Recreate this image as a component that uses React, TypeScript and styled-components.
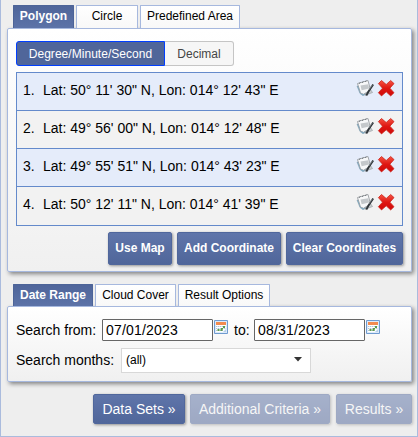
import React from "react";
import styled, { createGlobalStyle, css } from "styled-components";

const Global = createGlobalStyle`
  *{box-sizing:border-box}
  html,body{margin:0;background:#eee}
  body,button,input{font-family:"Liberation Sans",Arial,sans-serif;color:#000}
  button{margin:0;padding:0;white-space:nowrap}
`;

const Sidebar = styled.main`
  width: 418px;
  height: 437px;
  overflow: hidden;
  padding: 5px 5px 0 6px;
  background: #eee;
  border: solid #aabbdd;
  border-width: 0 1px 1px 1px;
`;

const Tabs = styled.nav<{ $height: number; $top?: number }>`
  display: flex;
  gap: 2px;
  height: ${(p) => p.$height}px;
  margin: ${(p) => p.$top ?? 0}px 0 0 6px;
`;

const Tab = styled.button<{ $width: number; $active?: boolean }>`
  width: ${(p) => p.$width}px;
  height: 100%;
  padding-bottom: 2px;
  font-size: 12px;
  border: 1px solid #a6b8de;
  border-bottom: 0;
  border-radius: 1px 1px 0 0;
  background: linear-gradient(#fff, #f8f8f8);
  ${(p) =>
    p.$active &&
    css`
      color: #fff;
      font-weight: bold;
      border-color: #4d6498;
      background: linear-gradient(#4f659a, #5c73a8);
    `}
`;

const Panel = styled.section<{ $height: number }>`
  width: 405px;
  height: ${(p) => p.$height}px;
  padding: 12px 8px 0 8px;
  border: 1px solid #a6b8de;
  border-radius: 2px;
  background: linear-gradient(#fff, #f0f0f0);
  box-shadow: 2px 2px 4px rgba(0, 0, 0, 0.45);
`;

const Toggle = styled.div`
  display: flex;
  height: 25px;
  margin-bottom: 6px;
`;

const ToggleOption = styled.button<{ $selected?: boolean }>`
  width: ${(p) => (p.$selected ? 149 : 69)}px;
  font-size: 12px;
  letter-spacing: ${(p) => (p.$selected ? 0.04 : 0)}px;
  color: ${(p) => (p.$selected ? "#fff" : "#454545")};
  background: ${(p) => (p.$selected ? "#50669a" : "#f6f6f6")};
  border: 1px solid ${(p) => (p.$selected ? "#003eff" : "#c5c5c5")};
  border-left-width: ${(p) => (p.$selected ? 1 : 0)}px;
  border-radius: ${(p) => (p.$selected ? "3px 0 0 3px" : "0 3px 3px 0")};
`;

const CoordinateList = styled.ul`
  width: 387px;
  margin: 0;
  padding: 0;
  list-style: none;
  border: 1px solid #648acb;
`;

const CoordinateRow = styled.li`
  display: flex;
  height: 38px;
  padding: 6px 7px 0 6px;
  border-bottom: 1px solid #648acb;
  background: #f2f2f2;
  &:nth-child(odd) {
    background: #e5ecfa;
  }
  &:last-child {
    border-bottom: 0;
  }
`;

const Coordinate = styled.span`
  flex: 1;
  padding-top: 2px;
  font-size: 14px;
  line-height: 18px;
  white-space: pre;
`;

const Ordinal = styled.span`
  display: inline-block;
  width: 20px;
`;

const RowIcon = styled.svg`
  width: 18px;
  height: 18px;
  margin-left: 3px;
`;

const Actions = styled.div<{ $footer?: boolean }>`
  display: flex;
  justify-content: flex-end;
  gap: 5px;
  margin-top: ${(p) => (p.$footer ? 12 : 6)}px;
`;

const Button = styled.button<{ $width: number; $large?: boolean }>`
  width: ${(p) => p.$width}px;
  height: ${(p) => (p.$large ? 30 : 33)}px;
  padding-bottom: ${(p) => (p.$large ? 0 : 2)}px;
  color: #fff;
  font-size: ${(p) => (p.$large ? 14 : 12)}px;
  font-weight: ${(p) => (p.$large ? "normal" : "bold")};
  border: 1px solid #50679c;
  border-radius: 2px;
  background: linear-gradient(#5f75aa, #50669a);
  box-shadow: 1px 1px 3px rgba(0, 0, 0, 0.4);
  &:disabled {
    opacity: 0.5;
  }
  &:last-child {
    margin-left: ${(p) => (p.$large ? 1 : 0)}px;
  }
`;

const Field = styled.div<{ $height: number; $top?: number }>`
  display: flex;
  height: ${(p) => p.$height}px;
  margin-top: ${(p) => p.$top ?? 0}px;
  font-size: 14px;
  line-height: ${(p) => p.$height}px;
  white-space: nowrap;
`;

const Label = styled.label<{ $width: number }>`
  width: ${(p) => p.$width}px;
`;

const DateInput = styled.input`
  width: 111px;
  height: 22px;
  padding: 0 4px 0 3px;
  font-size: 14px;
  letter-spacing: 0.2px;
  border: 1px solid #666;
  border-radius: 1px;
  background: #fff;
  outline: none;
`;

const CalendarSvg = styled.svg`
  width: 14px;
  height: 14px;
  margin: 1px 6px 0 1px;
`;

const Select = styled.button`
  display: flex;
  align-items: center;
  justify-content: space-between;
  width: 190px;
  height: 25px;
  padding: 0 8px 2px 4px;
  font-size: 12px;
  border: 1px solid #d8d8d8;
  background: #fff;
`;

const Caret = styled.svg`
  width: 8px;
  height: 5px;
`;

const NoteIcon = () => (
  <RowIcon viewBox="0 0 18 18">
    <path d="M1 7 4 14.500l3 2.200 3-1.700-5-7z" fill="#6fb4da" stroke="#7d929e" strokeWidth=".5" />
    <path d="m12 7 4.500 6.500-7.500 2.800z" fill="#c9cdd0" stroke="#8f9599" strokeWidth=".6" />
    <path d="M1.500 4.500 12 1.500l2.500 9.500-7 4.300-3-1.300z" fill="#f7f8f9" stroke="#989da1" strokeWidth=".9" />
    <path d="m4.500 6.500 7.800-1.300.8 4.300-7.500 1.700z" fill="#c4c8cb" />
    <path d="m3.300 4.800 1-1.600m2 .7 1-1.600m2 .7 1-1.500" stroke="#62686d" strokeWidth=".8" />
    <path d="m10.300 16.500 2.200-4 4.700-7" fill="none" stroke="#30363a" strokeWidth="1.900" />
    <path d="m12.800 11 3.500-5" stroke="#a0a6ab" strokeWidth=".6" />
  </RowIcon>
);

const DeleteIcon = () => (
  <RowIcon viewBox="0 0 18 18">
    <defs>
      <linearGradient id="cross" x1="0" y1="0" x2="0" y2="1">
        <stop stopColor="#f55444" />
        <stop offset=".5" stopColor="#df1712" />
        <stop offset="1" stopColor="#cf0808" />
      </linearGradient>
    </defs>
    <path
      d="m4.500 1.500 4.700 4 4.500-4 3.300 3.100-4.100 4.600 4.100 4.500-3.300 3.200-4.500-4.100-4.700 4.100-3.100-3.200 4.100-4.500-4.100-4.600z"
      fill="url(#cross)"
      stroke="#cc231b"
      strokeWidth=".8"
      strokeLinejoin="round"
    />
  </RowIcon>
);

const CalendarIcon = () => (
  <CalendarSvg viewBox="0 0 14 14">
    <path d="M.5.5h13v13H.5z" fill="#dceafa" stroke="#6f9bd0" />
    <path d="M2 4h10v8H2z" fill="#fff" />
    <path d="M2 2h10v3H2z" fill="#f28b50" />
    <path d="M2 6.500h10M2 8.500h10M2 10.500h7" stroke="#b3c3d8" strokeDasharray="1.400 .6" />
    <path d="M9 6h2v2H9zM7 8h2v1.500H7zM3.500 9h2v2h-2zM6.500 9h2v2h-2z" fill="#5b9c4a" />
    <path d="m9 12 3-3v3z" fill="#b8d1eb" />
  </CalendarSvg>
);

const coordinates = [
  `Lat: 50° 11' 30" N, Lon: 014° 12' 43" E`,
  `Lat: 49° 56' 00" N, Lon: 014° 12' 48" E`,
  `Lat: 49° 55' 51" N, Lon: 014° 43' 23" E`,
  `Lat: 50° 12' 11" N, Lon: 014° 41' 39" E`,
];

export default function App() {
  return (
    <>
      <Global />
      <Sidebar>
        <Tabs $height={23}>
          <Tab $width={61} $active>Polygon</Tab>
          <Tab $width={62}>Circle</Tab>
          <Tab $width={100}>Predefined Area</Tab>
        </Tabs>
        <Panel $height={244}>
          <Toggle>
            <ToggleOption $selected>Degree/Minute/Second</ToggleOption>
            <ToggleOption>Decimal</ToggleOption>
          </Toggle>
          <CoordinateList>
            {coordinates.map((text, i) => (
              <CoordinateRow key={text}>
                <Coordinate><Ordinal>{i + 1}.</Ordinal>{text}</Coordinate>
                <NoteIcon />
                <DeleteIcon />
              </CoordinateRow>
            ))}
          </CoordinateList>
          <Actions>
            <Button $width={64}>Use Map</Button>
            <Button $width={104}>Add Coordinate</Button>
            <Button $width={117}>Clear Coordinates</Button>
          </Actions>
        </Panel>
        <Tabs $height={22} $top={12}>
          <Tab $width={80} $active>Date Range</Tab>
          <Tab $width={81}>Cloud Cover</Tab>
          <Tab $width={92}>Result Options</Tab>
        </Tabs>
        <Panel $height={76}>
          <Field $height={22}>
            <Label $width={86}>Search from:</Label>
            <DateInput defaultValue="07/01/2023" />
            <CalendarIcon />
            <Label $width={20}>to:</Label>
            <DateInput defaultValue="08/31/2023" />
            <CalendarIcon />
          </Field>
          <Field $height={25} $top={7}>
            <Label $width={105}>Search months:</Label>
            <Select>
              (all)
              <Caret viewBox="0 0 8 5"><path d="M0 0h8L4 4.5z" fill="#333" /></Caret>
            </Select>
          </Field>
        </Panel>
        <Actions $footer>
          <Button $large $width={92}>Data Sets »</Button>
          <Button $large $width={140} disabled>Additional Criteria »</Button>
          <Button $large $width={76} disabled>Results »</Button>
        </Actions>
      </Sidebar>
    </>
  );
}
